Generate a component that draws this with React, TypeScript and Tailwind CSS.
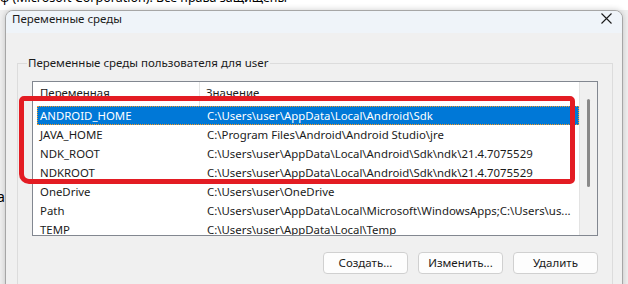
import React from 'react';

type EnvVar = { name: string; value: string; selected?: boolean };

const vars: EnvVar[] = [
  { name: 'ANDROID_HOME', value: 'C:\\Users\\user\\AppData\\Local\\Android\\Sdk', selected: true },
  { name: 'JAVA_HOME', value: 'C:\\Program Files\\Android\\Android Studio\\jre' },
  { name: 'NDK_ROOT', value: 'C:\\Users\\user\\AppData\\Local\\Android\\Sdk\\ndk\\21.4.7075529' },
  { name: 'NDKROOT', value: 'C:\\Users\\user\\AppData\\Local\\Android\\Sdk\\ndk\\21.4.7075529' },
  { name: 'OneDrive', value: 'C:\\Users\\user\\OneDrive' },
  { name: 'Path', value: 'C:\\Users\\user\\AppData\\Local\\Microsoft\\WindowsApps;C:\\Users\\us...' },
  { name: 'TEMP', value: 'C:\\Users\\user\\AppData\\Local\\Temp' },
];

function CloseIcon() {
  return (
    <svg width="11" height="11" viewBox="0 0 11 11" className="block">
      <path d="M0.5 0.5 L10.5 10.5 M10.5 0.5 L0.5 10.5" stroke="#1a1a1a" strokeWidth="1.1" fill="none" />
    </svg>
  );
}

function WinButton({ label }: { label: string }) {
  return (
    <button className="w-[85px] h-[22px] bg-[#fdfdfd] border border-[#d0d0d0] rounded-[4px] text-[11.5px] text-[#1b1b1b] leading-none">
      {label}
    </button>
  );
}

export default function App() {
  return (
    <div
      className="relative w-[628px] h-[284px] overflow-hidden bg-[#f0f0f0] text-[#1b1b1b]"
      style={{ fontFamily: '"Noto Sans", "Open Sans", sans-serif' }}
    >
      {/* window behind the dialog */}
      <div className="absolute left-0 top-0 w-full h-[10px] bg-white" />
      <span className="absolute left-[0px] top-[-11px] text-[12.5px] text-black whitespace-nowrap">
        ф (Microsoft Corporation). Все права защищены
      </span>
      <span className="absolute left-[-3px] top-[186px] text-[14px] text-black">a</span>

      {/* dialog */}
      <div className="relative ml-[5px] mt-[10px] w-[618px] h-[300px] rounded-t-[8px] border border-[#a6a6a6] bg-[#f0f0f0] shadow-[0_0_6px_rgba(0,0,0,0.2)] overflow-hidden">
        <div className="h-[22px] bg-[#eff4f9] flex items-start justify-between pl-[6px] pr-[10px]">
          <span className="text-[11.5px] leading-[15px]">Переменные среды</span>
          <div className="pt-[2px]">
            <CloseIcon />
          </div>
        </div>

        <fieldset className="ml-[11px] mt-[22px] w-[593px] h-[260px] border border-[#dcdcdc] px-[14px]">
          <legend className="-ml-[5px] px-[1px] text-[11.5px] leading-[16px]">Переменные среды пользователя для user</legend>

          <div className="mt-[10px] w-[566px] h-[155px] border border-[#828790] bg-white flex overflow-hidden">
            <div className="flex-1 flex flex-col text-[11.4px] overflow-hidden">
              <div className="h-[24px] shrink-0 flex">
                <div className="w-[167px] pl-[7px] pt-[3px] leading-[16px] border-r border-[#e5e5e5]">Переменная</div>
                <div className="pl-[6px] pt-[3px] leading-[16px]">Значение</div>
              </div>
              {vars.map((v) => (
                <div
                  key={v.name}
                  className={`ml-[4px] h-[19px] shrink-0 flex items-center whitespace-nowrap ${
                    v.selected ? 'bg-[#0078d7] text-white outline outline-1 outline-dotted outline-[#f59a23] -outline-offset-1' : ''
                  }`}
                >
                  <div className="w-[163px] pl-[3px]">{v.name}</div>
                  <div className="pl-[7px]">{v.value}</div>
                </div>
              ))}
            </div>
            <div className="w-[18px] shrink-0 border-l border-[#e3e3e3] bg-[#f0f0f0] pt-[17px] flex justify-center">
              <div className="w-[3px] h-[88px] rounded-full bg-[#8a8a8a]" />
            </div>
          </div>

          <div className="mt-[16px] flex justify-end gap-[10px]">
            <WinButton label="Создать..." />
            <WinButton label="Изменить..." />
            <WinButton label="Удалить" />
          </div>
        </fieldset>
      </div>

      {/* red annotation drawn over the screenshot */}
      <div className="absolute left-[19px] top-[96px] w-[556px] h-[88px] border-[5px] border-[#e31c23] rounded-[5px] rounded-bl-[10px]" />
    </div>
  );
}
